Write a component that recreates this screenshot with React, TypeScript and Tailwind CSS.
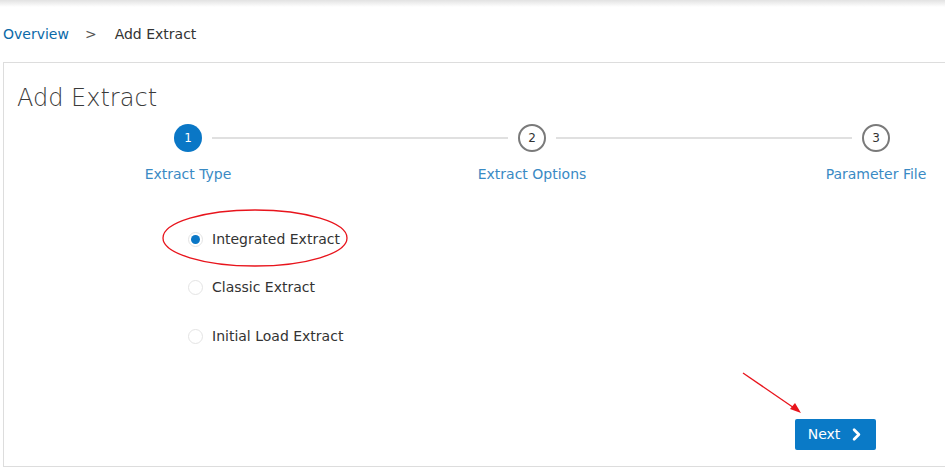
import React from "react";
import { ChevronRight } from "lucide-react";

const steps = [
  { n: 1, label: "Extract Type", active: true },
  { n: 2, label: "Extract Options", active: false },
  { n: 3, label: "Parameter File", active: false },
];

const options = [
  { label: "Integrated Extract", checked: true },
  { label: "Classic Extract", checked: false },
  { label: "Initial Load Extract", checked: false },
];

const App = () => {
  return (
    <div
      className="relative w-[945px] h-[471px] overflow-hidden bg-white text-[#333]"
      style={{ fontFamily: '"DejaVu Sans", Verdana, sans-serif' }}
    >
      {/* shadow from the header above */}
      <div className="h-[7px] bg-gradient-to-b from-[#e2e2e2] to-white" />

      {/* breadcrumb */}
      <div className="flex items-center h-[55px] pl-[3px] text-[14px] pb-[1px]">
        <span className="text-[#0b6aa8]">Overview</span>
        <span className="ml-[16px] text-[#555]">&gt;</span>
        <span className="ml-[18px]">Add Extract</span>
      </div>

      {/* panel */}
      <div className="ml-[3px] w-[1100px] h-[405px] border border-[#dddddd] pt-[20px]">
        <h1 className="pl-[13px] text-[24px] leading-[31px] font-extralight text-[#3a3a3a]">
          Add Extract
        </h1>

        <div className="ml-[12px] mt-[10px] grid grid-cols-[344px_344px_344px]">
          {steps.map((s, i) => (
            <div key={s.n} className="relative flex flex-col items-center">
              {i < steps.length - 1 && (
                <div className="absolute top-[13px] left-[196px] w-[296px] h-[2px] bg-[#e0e0e0]" />
              )}
              {s.active ? (
                <div className="w-[28px] h-[28px] rounded-full bg-[#0a77c6] text-white text-[12px] flex items-center justify-center">
                  {s.n}
                </div>
              ) : (
                <div className="w-[28px] h-[28px] rounded-full border-2 border-[#7a7a7a] bg-white text-[#333] text-[12px] flex items-center justify-center">
                  {s.n}
                </div>
              )}
              <div className="mt-[12px] text-[14px] leading-[20px] text-[#3a8ac4]">
                {s.label}
              </div>
            </div>
          ))}
        </div>

        <div className="mt-[31px] pl-[184px] flex flex-col">
          {options.map((o) => (
            <label key={o.label} className="flex items-center h-[48.5px]">
              <span className="w-[15px] h-[15px] rounded-full border border-[#e4e4e4] bg-white flex items-center justify-center">
                {o.checked && <span className="w-[9px] h-[9px] rounded-full bg-[#0a77c6]" />}
              </span>
              <span className="ml-[9px] text-[14px]">{o.label}</span>
            </label>
          ))}
        </div>

        <div className="mt-[58px] pl-[791px]">
          <button className="w-[81px] h-[31px] rounded-[2px] bg-[#0a7ac7] text-white text-[14px] flex items-center justify-center gap-[7px] pl-[3px]">
            <span>Next</span>
            <ChevronRight size={19} strokeWidth={3.5} />
          </button>
        </div>
      </div>

      {/* annotations */}
      <svg className="absolute inset-0 pointer-events-none" width="945" height="471">
        <ellipse cx="255" cy="238" rx="92" ry="28" fill="none" stroke="#e8141c" strokeWidth="1.3" />
        <line x1="743" y1="373" x2="797" y2="410" stroke="#e8141c" strokeWidth="1.3" />
        <polygon points="801,413 790,409 795,403" fill="#e8141c" />
      </svg>
    </div>
  );
};

export default App;
